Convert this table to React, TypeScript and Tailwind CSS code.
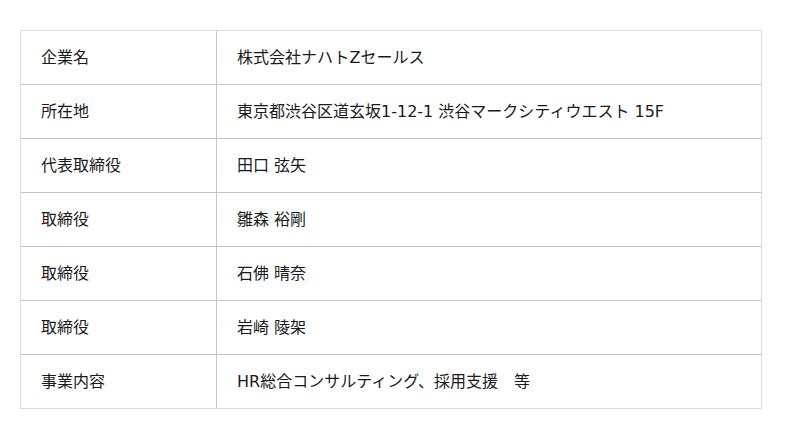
import React from "react";

const rows: [string, string][] = [
  ["企業名", "株式会社ナハトZセールス"],
  ["所在地", "東京都渋谷区道玄坂1-12-1 渋谷マークシティウエスト 15F"],
  ["代表取締役", "田口 弦矢"],
  ["取締役", "雛森 裕剛"],
  ["取締役", "石佛 晴奈"],
  ["取締役", "岩崎 陵架"],
  ["事業内容", "HR総合コンサルティング、採用支援　等"],
];

export default function App() {
  return (
    <div
      className="w-[800px] h-[439px] bg-white pt-[30px] pl-[20px]"
      style={{ fontFamily: '"DejaVu Sans", "Noto Sans CJK JP", sans-serif' }}
    >
      <div className="w-[742px] border border-[#dcdcdc] text-[16px] text-[#1a1a1a]">
        {rows.map(([k, v], i) => (
          <div
            key={i}
            className={
              i > 0
                ? "flex h-[54px] border-t border-[#c4c4c4]"
                : "flex h-[53px]"
            }
          >
            <div className="w-[196px] border-r border-[#c4c4c4] flex items-center pl-[20px]">
              {k}
            </div>
            <div className="flex-1 flex items-center pl-[20px]">{v}</div>
          </div>
        ))}
      </div>
    </div>
  );
}
